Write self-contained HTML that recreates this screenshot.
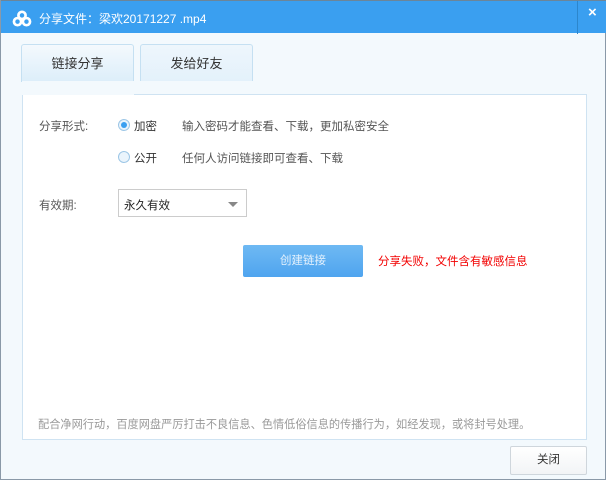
<!DOCTYPE html><html><head><meta charset="utf-8"><style>
*{margin:0;padding:0;box-sizing:border-box}
body{width:606px;height:480px;overflow:hidden;background:#f3f9fd;font-family:"Liberation Sans","Noto Sans CJK SC",sans-serif;font-size:11.5px;color:#333;position:relative;border:1px solid #8a99a8;border-top:none}
.a{position:absolute}
.title{left:0;top:0;width:606px;height:33px;background:#3a9ff0;border-top:1px solid #6b8599}
.title span{position:absolute;left:38px;top:9px;color:#fff;font-size:12px}
.tab{top:44px;height:38px;width:113px;border:1px solid #c5e0f2;border-bottom:none;border-radius:3px 3px 0 0;background:linear-gradient(#f4f9fd,#dceefa);text-align:center;line-height:38px;font-size:13px}
.panel{left:21px;top:94px;width:565px;height:346px;background:#fff;border:1px solid #cfe3f2}
.radio{width:12px;height:12px;border-radius:50%;border:1px solid #9cc6e6;background:#eaf4fc}
.radio.on::after{content:"";position:absolute;left:2px;top:2px;width:6px;height:6px;border-radius:50%;background:#3a9ff0}
.g{color:#555}
</style></head><body>
<div class="a title"><svg class="a" style="left:11px;top:9px" width="20" height="17" viewBox="0 0 22 19"><g fill="none" stroke="#fff" stroke-width="3"><circle cx="11" cy="6" r="4"/><circle cx="6" cy="13" r="4"/><circle cx="16" cy="13" r="4"/></g></svg><span>分享文件：梁欢20171227 .mp4</span>
<div class="a" style="left:576px;top:0;width:1px;height:33px;background:#2c86cc"></div>
<div class="a" style="left:587px;top:3px;color:#fff;font-size:15px;font-weight:bold">×</div></div>
<div class="a tab" style="left:20px">链接分享</div>
<div class="a tab" style="left:139px;height:37px;background:linear-gradient(#eef6fc,#e3f1fb)">发给好友</div>
<div class="a panel"></div>
<div class="a" style="left:21px;top:81px;width:112px;height:14px;background:#f3f9fd"></div>
<div class="a g" style="left:38px;top:118px">分享形式:</div>
<div class="a radio on" style="left:117px;top:119px"></div><div class="a" style="left:133px;top:118px">加密</div>
<div class="a g" style="left:181px;top:118px">输入密码才能查看、下载，更加私密安全</div>
<div class="a radio" style="left:117px;top:151px"></div><div class="a" style="left:133px;top:150px">公开</div>
<div class="a g" style="left:181px;top:150px">任何人访问链接即可查看、下载</div>
<div class="a g" style="left:38px;top:197px">有效期:</div>
<div class="a" style="left:117px;top:189px;width:129px;height:28px;border:1px solid #ccc;background:#fff;padding:7px 5px;color:#222">永久有效</div>
<div class="a" style="left:227px;top:202px;border:5px solid transparent;border-top:5px solid #888;border-bottom:none"></div>
<div class="a" style="left:242px;top:245px;width:120px;height:32px;background:linear-gradient(#6eb9f3,#4fa4ef);border-radius:2px;color:#e6f2fd;text-align:center;line-height:32px">创建链接</div>
<div class="a" style="left:377px;top:253px;color:#f20000">分享失败，文件含有敏感信息</div>
<div class="a" style="left:37px;top:416px;color:#999;font-size:11.2px">配合净网行动，百度网盘严厉打击不良信息、色情低俗信息的传播行为，如经发现，或将封号处理。</div>
<div class="a" style="left:509px;top:446px;width:77px;height:29px;border:1px solid #cfd6dc;border-radius:2px;background:linear-gradient(#fff,#f2f4f6);text-align:center;line-height:27px">关闭</div>
</body></html>
